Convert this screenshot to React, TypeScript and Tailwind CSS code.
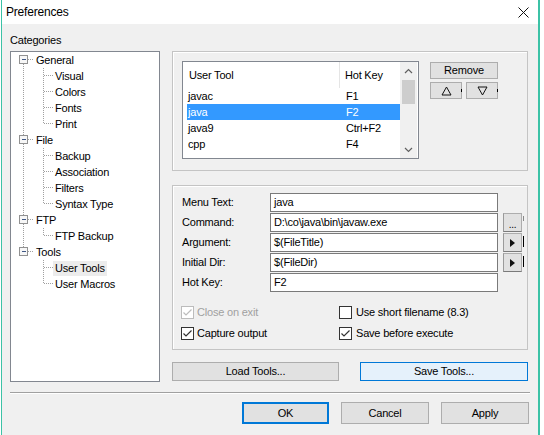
import React from "react";

type TreeRow = {
  label: string;
  level: 0 | 1;
  first?: boolean;
  lastRoot?: boolean;
  lastChild?: boolean;
  underLastRoot?: boolean;
  selected?: boolean;
};

const treeRows: TreeRow[] = [
  { label: "General", level: 0, first: true },
  { label: "Visual", level: 1 },
  { label: "Colors", level: 1 },
  { label: "Fonts", level: 1 },
  { label: "Print", level: 1, lastChild: true },
  { label: "File", level: 0 },
  { label: "Backup", level: 1 },
  { label: "Association", level: 1 },
  { label: "Filters", level: 1 },
  { label: "Syntax Type", level: 1, lastChild: true },
  { label: "FTP", level: 0 },
  { label: "FTP Backup", level: 1, lastChild: true },
  { label: "Tools", level: 0, lastRoot: true },
  { label: "User Tools", level: 1, underLastRoot: true, selected: true },
  { label: "User Macros", level: 1, underLastRoot: true, lastChild: true },
];

const tools = [
  { name: "javac", key: "F1" },
  { name: "java", key: "F2", selected: true },
  { name: "java9", key: "Ctrl+F2" },
  { name: "cpp", key: "F4" },
];

const fields = [
  { label: "Menu Text:", value: "java", side: null },
  { label: "Command:", value: "D:\\co\\java\\bin\\javaw.exe", side: "dots" },
  { label: "Argument:", value: "$(FileTitle)", side: "arrow" },
  { label: "Initial Dir:", value: "$(FileDir)", side: "arrow" },
  { label: "Hot Key:", value: "F2", side: null },
];

const dot = { stroke: "#a0a0a0", strokeDasharray: "1 1", shapeRendering: "crispEdges" as const };

function TreeLines({ row }: { row: TreeRow }) {
  if (row.level === 0) {
    return (
      <svg width="23" height="16" className="shrink-0">
        {!row.first && <line x1="12.5" y1="0" x2="12.5" y2="3" {...dot} />}
        {!row.lastRoot && <line x1="12.5" y1="12" x2="12.5" y2="16" {...dot} />}
        <line x1="17" y1="7.5" x2="23" y2="7.5" {...dot} />
        <rect x="8.5" y="3.5" width="8" height="8" fill="#f7f7f7" stroke="#919191" shapeRendering="crispEdges" />
        <line x1="10.5" y1="7.5" x2="14.5" y2="7.5" stroke="#3f5886" shapeRendering="crispEdges" />
      </svg>
    );
  }
  return (
    <svg width="42" height="16" className="shrink-0">
      {!row.underLastRoot && <line x1="12.5" y1="0" x2="12.5" y2="16" {...dot} />}
      <line x1="32.5" y1="0" x2="32.5" y2={row.lastChild ? 8 : 16} {...dot} />
      <line x1="33" y1="7.5" x2="42" y2="7.5" {...dot} />
    </svg>
  );
}

function Check({ checked, disabled }: { checked?: boolean; disabled?: boolean }) {
  const c = disabled ? "#bcbcbc" : "#333333";
  return (
    <svg width="13" height="13" className="shrink-0">
      <rect x="0.5" y="0.5" width="12" height="12" fill="#fff" stroke={c} shapeRendering="crispEdges" />
      {checked && <path d="M2.5 6.5 L5 9 L10.5 3.5" fill="none" stroke={c} strokeWidth="1.2" />}
    </svg>
  );
}

function Btn({
  children,
  className = "",
}: {
  children: React.ReactNode;
  className?: string;
}) {
  return (
    <div
      className={`flex items-center justify-center border border-[#adadad] bg-[#e1e1e1] text-[11px] text-black ${className}`}
    >
      {children}
    </div>
  );
}

export default function App() {
  return (
    <div className="flex h-[435px] w-[544px] bg-white font-['Liberation_Sans',Arial,sans-serif] text-[11px] tracking-[-0.2px] text-black">
      <div className="ml-[1px] flex h-[435px] w-[539px] flex-col border-l border-r-2 border-[#3cc2a6]">
        {/* title bar */}
        <div className="flex h-[24px] shrink-0 items-center justify-between bg-white pl-[4px] pr-[9px]">
          <span className="text-[12px]">Preferences</span>
          <svg width="11" height="11">
            <path d="M0.5 0.5 L10.5 10.5 M10.5 0.5 L0.5 10.5" stroke="#111" strokeWidth="1" />
          </svg>
        </div>

        <div className="flex flex-1 flex-col bg-[#f0f0f0] pl-[8px] pt-[9px]">
          <div className="h-[14px] leading-[14px]">Categories</div>

          <div className="mt-[4px] flex">
            {/* tree */}
            <div className="h-[331px] w-[150px] shrink-0 border border-[#828790] bg-white">
              {treeRows.map((row) => (
                <div key={row.label} className="flex h-[16px] items-center">
                  <TreeLines row={row} />
                  <span
                    className={`px-[2px] leading-[15px] ${row.selected ? "bg-[#ececec]" : ""}`}
                  >
                    {row.label}
                  </span>
                </div>
              ))}
            </div>

            {/* right side */}
            <div className="ml-[12px] flex w-[356px] flex-col">
              {/* group 1: tool list */}
              <div className="flex h-[120px] border border-[#c4c4c4] pl-[9px] pt-[9px] shadow-[inset_1px_1px_0_#fff]">
                <div className="flex h-[98px] w-[237px] border border-[#828790] bg-white">
                  <div className="flex w-[217px] flex-col">
                    <div className="flex h-[26px] items-center">
                      <div className="flex h-full w-[157px] items-center border-r border-[#e5e5e5] pl-[6px]">
                        User Tool
                      </div>
                      <div className="pl-[5px]">Hot Key</div>
                    </div>
                    {tools.map((t) => (
                      <div
                        key={t.name}
                        className={`ml-[4px] flex h-[16px] items-center ${
                          t.selected ? "bg-[#3399ff] text-white" : ""
                        }`}
                      >
                        <div className="w-[159px] pl-[1px]">{t.name}</div>
                        <div>{t.key}</div>
                      </div>
                    ))}
                  </div>
                  <div className="flex w-[17px] flex-col bg-[#f0f0f0]">
                    <div className="flex h-[17px] items-center justify-center">
                      <svg width="9" height="6">
                        <path d="M1 5 L4.5 1.5 L8 5" fill="none" stroke="#606060" strokeWidth="1.2" />
                      </svg>
                    </div>
                    <div className="mx-[2px] mt-[1px] h-[24px] bg-[#cdcdcd]" />
                    <div className="flex-1" />
                    <div className="flex h-[17px] items-center justify-center">
                      <svg width="9" height="6">
                        <path d="M1 1 L4.5 4.5 L8 1" fill="none" stroke="#606060" strokeWidth="1.2" />
                      </svg>
                    </div>
                  </div>
                </div>

                <div className="ml-[11px] mt-[1px] flex flex-col">
                  <Btn className="h-[17px] w-[68px]">Remove</Btn>
                  <div className="mt-[3px] flex gap-[4px]">
                    <Btn className="relative h-[17px] w-[32px]">
                      <svg width="11" height="10">
                        <path d="M5.5 1 L10 9 L1 9 Z" fill="none" stroke="#111" strokeWidth="1" />
                      </svg>
                      <span className="absolute right-[-1px] top-[6px] h-[3px] w-[1px] bg-black" />
                    </Btn>
                    <Btn className="relative h-[17px] w-[32px]">
                      <svg width="11" height="10">
                        <path d="M1 1 L10 1 L5.5 9 Z" fill="none" stroke="#111" strokeWidth="1" />
                      </svg>
                      <span className="absolute right-[-1px] top-[6px] h-[3px] w-[1px] bg-black" />
                    </Btn>
                  </div>
                </div>
              </div>

              {/* group 2: tool details */}
              <div className="mt-[14px] flex h-[165px] flex-col border border-[#c4c4c4] pt-[7px] shadow-[inset_1px_1px_0_#fff]">
                <div className="flex flex-col gap-[1px] pl-[9px]">
                  {fields.map((f) => (
                    <div key={f.label} className="flex h-[19px] items-center">
                      <div className="w-[88px]">{f.label}</div>
                      <div className="flex h-[19px] w-[228px] items-center border border-[#7a7a7a] bg-white pl-[3px]">
                        {f.value}
                      </div>
                      {f.side && (
                        <div className="relative ml-[5px] flex h-[19px] w-[19px] items-center justify-center border border-[#adadad] border-b-[#7a7a7a] border-l-[#9a9a9a] bg-[#e1e1e1]">
                          {f.side === "dots" ? (
                            <span className="mt-[4px] text-[10px] leading-none">...</span>
                          ) : (
                            <svg width="5" height="8">
                              <path d="M0 0 L5 4 L0 8 Z" fill="#111" />
                            </svg>
                          )}
                          <span
                            className={`absolute right-[-3px] top-[2px] w-[1px] ${
                              f.side === "dots" ? "h-[5px] bg-[#888]" : "h-[11px] bg-black"
                            }`}
                          />
                        </div>
                      )}
                    </div>
                  ))}
                </div>

                <div className="mt-[10px] flex flex-col pl-[8px]">
                  <div className="flex h-[21px] items-center">
                    <div className="flex w-[158px] items-center gap-[3px] text-[#a0a0a0]">
                      <Check checked disabled />
                      Close on exit
                    </div>
                    <div className="flex items-center gap-[4px]">
                      <Check />
                      Use short filename (8.3)
                    </div>
                  </div>
                  <div className="flex h-[21px] items-center">
                    <div className="flex w-[158px] items-center gap-[3px]">
                      <Check checked />
                      Capture output
                    </div>
                    <div className="flex items-center gap-[4px]">
                      <Check checked />
                      Save before execute
                    </div>
                  </div>
                </div>
              </div>

              <div className="mt-[12px] flex justify-between">
                <Btn className="h-[19px] w-[167px]">Load Tools...</Btn>
                <div className="flex h-[19px] w-[168px] items-center justify-center border border-[#0078d7] bg-[#e5f1fb]">
                  Save Tools...
                </div>
              </div>
            </div>
          </div>

          {/* separator */}
          <div className="mt-[10px] h-[2px] w-[520px] border-t border-[#a0a0a0] bg-white" />

          <div className="mt-[8px] flex gap-[12px] pl-[232px]">
            <div className="flex h-[22px] w-[87px] items-center justify-center border border-[#0078d7] bg-[#e1e1e1] shadow-[inset_0_0_0_1px_#0078d7]">
              OK
            </div>
            <Btn className="h-[22px] w-[88px]">Cancel</Btn>
            <Btn className="h-[22px] w-[88px]">Apply</Btn>
          </div>
        </div>
      </div>
    </div>
  );
}
